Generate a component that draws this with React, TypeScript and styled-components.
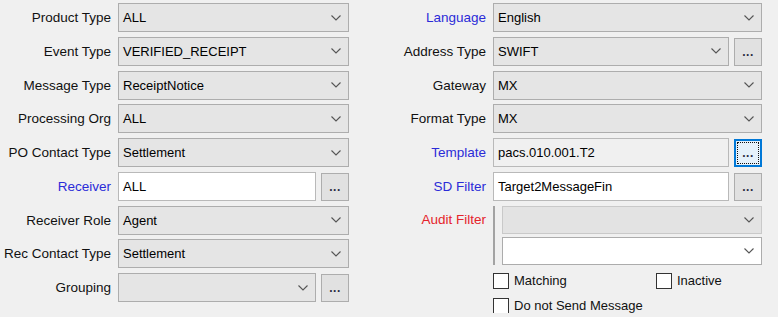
import React from 'react'
import styled, { createGlobalStyle, css } from 'styled-components'

const GlobalStyle = createGlobalStyle`
  html, body {
    margin: 0;
    padding: 0;
    background: #f0f0f0;
    font-family: 'Liberation Sans', Arial, sans-serif;
    color: #000;
  }
`

const Form = styled.div`
  display: flex;
  align-items: flex-start;
  gap: 31px;
  padding-top: 3px;
  width: 778px;
`

const Column = styled.div<{ $labelWidth: number; $fieldWidth: number; $lastRow?: number }>`
  display: grid;
  grid-template-columns: ${({ $labelWidth }) => $labelWidth}px ${({ $fieldWidth }) => $fieldWidth}px;
  grid-template-rows: repeat(8, 29px) ${({ $lastRow }) => $lastRow ?? 29}px;
  column-gap: 7px;
  row-gap: 4.75px;
`

const Label = styled.div<{ $tone?: 'blue' | 'red' }>`
  align-self: center;
  text-align: right;
  font-size: 13.5px;
  white-space: nowrap;
  color: ${({ $tone }) => ($tone === 'blue' ? '#2b2bd8' : $tone === 'red' ? '#e5232b' : '#111')};
`

const TopLabel = styled(Label)`
  align-self: start;
  margin-top: 6px;
`

const Field = styled.div`
  display: grid;
  grid-template-columns: 1fr 28px;
  column-gap: 5px;
  min-width: 0;
  height: 29px;
`

const ComboBox = styled.div<{ $variant?: 'gray' | 'white' | 'disabled'; $height?: number }>`
  box-sizing: border-box;
  height: ${({ $height }) => $height ?? 29}px;
  display: flex;
  align-items: center;
  justify-content: space-between;
  padding: 0 7px 0 4px;
  font-size: 13px;
  border: 1px solid #adadad;
  background: #e5e5e5;
  ${({ $variant }) =>
    $variant === 'white' &&
    css`
      background: #fff;
      border-color: #acacac;
    `}
  ${({ $variant }) =>
    $variant === 'disabled' &&
    css`
      background: #e3e3e3;
      border-color: #c9c9c9;
    `}
`

const TextBox = styled.div<{ $readOnly?: boolean }>`
  box-sizing: border-box;
  height: 29px;
  display: flex;
  align-items: center;
  padding: 0 4px;
  font-size: 13px;
  border: 1px solid #b9b9b9;
  background: ${({ $readOnly }) => ($readOnly ? '#f0f0f0' : '#fff')};
`

const DotsButton = styled.div<{ $focused?: boolean }>`
  box-sizing: border-box;
  height: 28px;
  margin-top: 1px;
  display: flex;
  align-items: flex-end;
  justify-content: center;
  padding-bottom: 6px;
  font-size: 12px;
  font-weight: bold;
  letter-spacing: 0.5px;
  color: #2b2b40;
  border: 1px solid #adadad;
  background: #e1e1e1;
  position: relative;
  ${({ $focused }) =>
    $focused &&
    css`
      border: 2px solid #0078d7;
      background: #e5f1fb;
      padding-bottom: 5px;
      &::after {
        content: '';
        position: absolute;
        inset: 1px;
        border: 1px dotted #111;
      }
    `}
`

const AuditGroup = styled.div`
  grid-row: span 2;
  height: 59px;
  display: flex;
  flex-direction: column;
  gap: 3px;
  border-left: 2px solid #a3a3a3;
  padding-left: 7px;
  margin-top: 0.5px;
`

const Checks = styled.div`
  grid-column: 2;
  display: grid;
  grid-template-columns: 163px auto;
  grid-auto-rows: 15px;
  row-gap: 10px;
`

const CheckItem = styled.label`
  display: flex;
  align-items: center;
  gap: 5px;
  font-size: 13px;
  color: #111;
  white-space: nowrap;
`

const CheckBox = styled.span`
  box-sizing: border-box;
  width: 16px;
  height: 16px;
  border: 1px solid #333;
  background: #fff;
`

const Chevron = () => (
  <svg width="10" height="6" viewBox="0 0 10 6">
    <polyline points="0.5,0.5 5,5 9.5,0.5" fill="none" stroke="#555" strokeWidth="1.1" />
  </svg>
)

const Combo = ({ value, variant, height }: { value?: string; variant?: 'gray' | 'white' | 'disabled'; height?: number }) => (
  <ComboBox $variant={variant} $height={height}>
    <span>{value}</span>
    <Chevron />
  </ComboBox>
)

export default function App() {
  return (
    <>
      <GlobalStyle />
      <Form>
        <Column $labelWidth={111} $fieldWidth={231}>
          <Label>Product Type</Label>
          <Combo value="ALL" />
          <Label>Event Type</Label>
          <Combo value="VERIFIED_RECEIPT" />
          <Label>Message Type</Label>
          <Combo value="ReceiptNotice" />
          <Label>Processing Org</Label>
          <Combo value="ALL" />
          <Label>PO Contact Type</Label>
          <Combo value="Settlement" />
          <Label $tone="blue">Receiver</Label>
          <Field>
            <TextBox>ALL</TextBox>
            <DotsButton>...</DotsButton>
          </Field>
          <Label>Receiver Role</Label>
          <Combo value="Agent" />
          <Label>Rec Contact Type</Label>
          <Combo value="Settlement" />
          <Label>Grouping</Label>
          <Field>
            <Combo />
            <DotsButton>...</DotsButton>
          </Field>
        </Column>

        <Column $labelWidth={106} $fieldWidth={269} $lastRow={40}>
          <Label $tone="blue">Language</Label>
          <Combo value="English" />
          <Label>Address Type</Label>
          <Field>
            <Combo value="SWIFT" />
            <DotsButton>...</DotsButton>
          </Field>
          <Label>Gateway</Label>
          <Combo value="MX" />
          <Label>Format Type</Label>
          <Combo value="MX" />
          <Label $tone="blue">Template</Label>
          <Field>
            <TextBox $readOnly>pacs.010.001.T2</TextBox>
            <DotsButton $focused>...</DotsButton>
          </Field>
          <Label $tone="blue">SD Filter</Label>
          <Field>
            <TextBox>Target2MessageFin</TextBox>
            <DotsButton>...</DotsButton>
          </Field>
          <TopLabel $tone="red">Audit Filter</TopLabel>
          <AuditGroup>
            <Combo variant="disabled" height={28} />
            <Combo variant="white" height={28} />
          </AuditGroup>
          <Checks>
            <CheckItem>
              <CheckBox />
              Matching
            </CheckItem>
            <CheckItem>
              <CheckBox />
              Inactive
            </CheckItem>
            <CheckItem>
              <CheckBox />
              Do not Send Message
            </CheckItem>
          </Checks>
        </Column>
      </Form>
    </>
  )
}
